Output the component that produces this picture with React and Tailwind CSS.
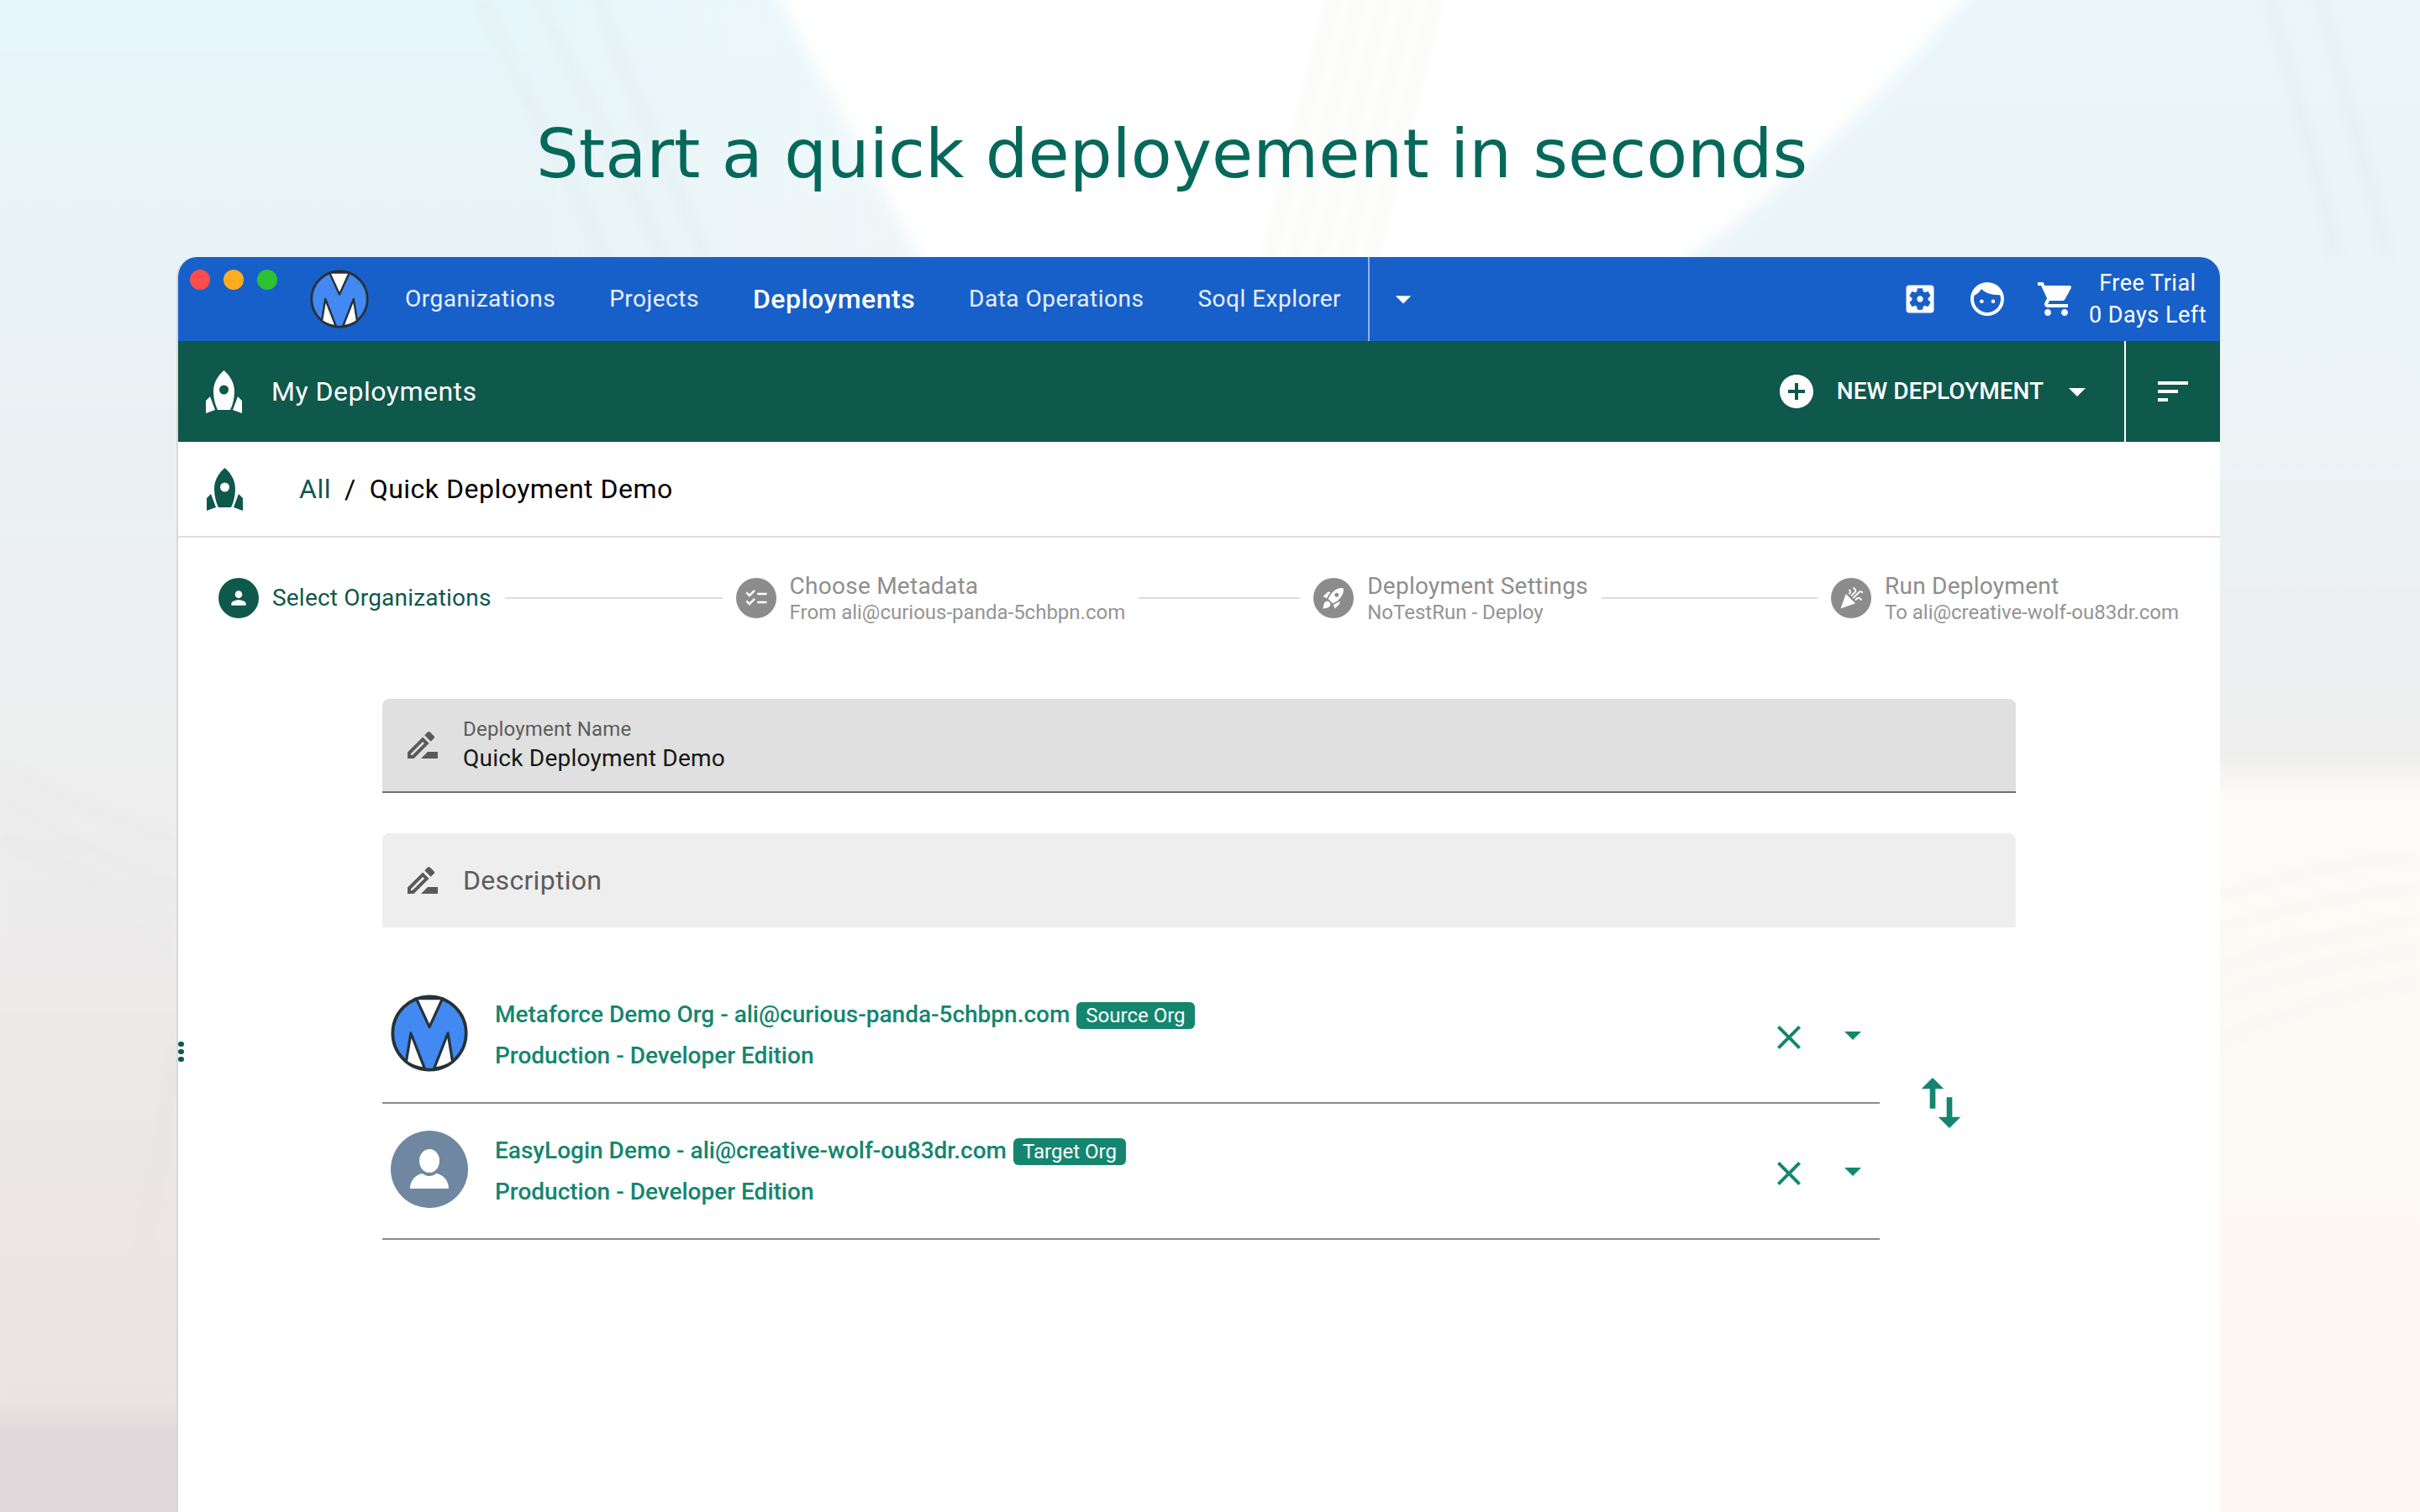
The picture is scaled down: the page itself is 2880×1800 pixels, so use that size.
import React from "react";
import {
  MdSettingsApplications, MdShoppingCart, MdAddCircle, MdSort, MdClose,
  MdArrowDropDown, MdSwapVert, MdChecklist, MdRocketLaunch, MdCelebration,
  MdOutlineDriveFileRenameOutline, MdPerson,
} from "react-icons/md";

function Rocket({ className }) {
  return (
    <svg viewBox="0 0 43 51" className={className} fill="currentColor">
      <path fillRule="evenodd" d="M21.5 0C26 4 34 12 34 25C34 33 32 41 29 47H14C11 41 9 33 9 25C9 12 17 4 21.5 0ZM21.5 17.5a5.5 5.5 0 1 0 0 11a5.5 5.5 0 1 0 0-11Z" />
      <path d="M0 36L5 31L11 47L0 51ZM43 36L38 31L32 47L43 51Z" />
    </svg>
  );
}

function Logo({ className }) {
  return (
    <svg viewBox="0 0 100 100" className={className}>
      <circle cx="50" cy="50" r="47.5" fill="#4289f1" stroke="#263238" strokeWidth="4" />
      <path d="M33 5L67 5L50 42Z" fill="#fff" stroke="#263238" strokeWidth="3.5" strokeLinejoin="round" />
      <path d="M26 50L44 96Q30 94 20 87Z" fill="#fff" stroke="#263238" strokeWidth="3.5" strokeLinejoin="round" />
      <path d="M74 50L56 96Q70 94 80 87Z" fill="#fff" stroke="#263238" strokeWidth="3.5" strokeLinejoin="round" />
    </svg>
  );
}

function Face({ className }) {
  return (
    <svg viewBox="0 0 24 24" className={className} fill="currentColor">
      <path fillRule="evenodd" d="M12 2a10 10 0 1 0 0 20a10 10 0 1 0 0-20ZM12 4a8 8 0 1 1 0 16a8 8 0 1 1 0-16Z" />
      <path d="M3 10.5C5.5 9.5 7.5 8 8.5 6C11 8.5 15 10 21.5 9.5A10 10 0 0 0 3 10.5Z" />
      <circle cx="8.7" cy="13.4" r="1.15" />
      <circle cx="15.5" cy="13.4" r="1.15" />
    </svg>
  );
}

function Background() {
  return (
    <svg viewBox="0 0 2880 1800" className="absolute inset-0 w-[2880px] h-[1800px]">
      <defs>
        <linearGradient id="left" x1="0" y1="0" x2="0" y2="1">
          <stop offset="0" stopColor="#e6f6fb" />
          <stop offset="0.17" stopColor="#e8f3f6" />
          <stop offset="0.5" stopColor="#eeefef" />
          <stop offset="0.7" stopColor="#ece8e8" />
          <stop offset="0.92" stopColor="#ebe3e3" />
          <stop offset="0.935" stopColor="#e0d8da" />
          <stop offset="1" stopColor="#e0d8da" />
        </linearGradient>
        <linearGradient id="fade" x1="0" y1="0" x2="1" y2="0">
          <stop offset="0" stopColor="#ffffff" stopOpacity="0" />
          <stop offset="0.55" stopColor="#ffffff" stopOpacity="0" />
          <stop offset="1" stopColor="#ffffff" stopOpacity="0.35" />
        </linearGradient>
        <linearGradient id="right" x1="0" y1="0" x2="0" y2="1">
          <stop offset="0" stopColor="#ebf6fa" />
          <stop offset="0.3" stopColor="#ebf3f5" />
          <stop offset="0.5" stopColor="#eeeeee" />
          <stop offset="0.525" stopColor="#fdfbf8" />
          <stop offset="0.75" stopColor="#fdf9f4" />
          <stop offset="1" stopColor="#fdf6f1" />
        </linearGradient>
        <filter id="b1"><feGaussianBlur stdDeviation="9" /></filter>
        <filter id="b2"><feGaussianBlur stdDeviation="8" /></filter>
      </defs>
      <rect width="2880" height="1800" fill="#ffffff" />
      <path d="M-20 -20H915L1100 320V1820H-20Z" fill="url(#left)" filter="url(#b1)" />
      <path d="M-20 -20H915L1100 320H-20Z" fill="url(#fade)" filter="url(#b1)" />
      <path d="M2355 -20H2900V1820H1960V340Q2150 220 2355 -20Z" fill="url(#right)" filter="url(#b1)" />
      <g fill="none" stroke="#f6f6f4" strokeWidth="9" filter="url(#b2)">
        <path d="M1590 -10L1510 310" /><path d="M1620 -10L1540 310" /><path d="M1650 -10L1570 310" /><path d="M1680 -10L1600 310" /><path d="M1710 -10L1630 310" />
        <path d="M570 -10C620 120 680 200 720 310" stroke="#e4eff2" /><path d="M640 -10C690 120 750 200 790 310" stroke="#e4eff2" /><path d="M710 -10C750 120 800 200 840 310" stroke="#e4eff2" />
        <path d="M2700 -10C2730 120 2760 200 2780 310" stroke="#e4eff2" /><path d="M2760 -10C2790 120 2820 200 2840 310" stroke="#e4eff2" />
        <g stroke="#e9e9e9">
          <path d="M0 910C80 960 150 980 212 1000" /><path d="M0 950C80 1000 150 1030 212 1060" /><path d="M0 985C80 1030 150 1060 212 1110" /><path d="M0 1005C80 1040 150 1080 212 1150" />
          <path d="M212 1240C190 1400 170 1500 150 1560" stroke="#e8e4e4" />
        </g>
        <g stroke="#f7f6f3">
          <path d="M2642 1065C2700 1050 2780 1025 2880 1020" /><path d="M2642 1105C2700 1090 2780 1065 2880 1058" /><path d="M2642 1155C2700 1130 2780 1110 2880 1095" /><path d="M2642 1190C2700 1165 2780 1145 2880 1130" /><path d="M2642 1240C2700 1210 2780 1185 2880 1170" />
        </g>
      </g>
    </svg>
  );
}

const navItem = "text-[28px] leading-[36px] text-white/90 tracking-[0.5px]";

function Step({ icon, title, sub, active, lineW }) {
  return (
    <>
      <div className={`w-[48px] h-[48px] rounded-full flex items-center justify-center text-white shrink-0 ${active ? "bg-[#0f584c]" : "bg-[#8c8c8c]"}`}>{icon}</div>
      {sub ? (
        <div className="ml-[16px] mt-[2px] shrink-0">
          <div className="text-[28px] leading-[32px] text-[#8e8e8e] tracking-[0.25px]">{title}</div>
          <div className="text-[24px] leading-[30px] text-[#949494]">{sub}</div>
        </div>
      ) : (
        <div className="ml-[16px] shrink-0 text-[28px] leading-[34px] text-[#0f584c] tracking-[0.2px]">{title}</div>
      )}
      {lineW ? <div className="h-[2px] bg-[#dcdcdc] ml-[16px] mr-[16px] shrink-0" style={{ width: lineW }} /> : null}
    </>
  );
}

function Org({ avatar, name, badge }) {
  return (
    <div className="flex items-center h-[162px] border-b-2 border-[#8a8a8a] w-[1782px] pl-[10px] shrink-0">
      <div className="-mt-[4px] shrink-0">{avatar}</div>
      <div className="ml-[32px] flex-1 text-[#14866f] font-medium text-[28px]">
        <div className="flex items-center h-[36px]">
          <span>{name}</span>
          <span className="ml-[8px] mt-[2px] h-[32px] px-[11px] rounded-[6px] bg-[#14866f] text-white text-[24px] font-normal leading-[32px]">{badge}</span>
        </div>
        <div className="mt-[13px] leading-[36px]">Production - Developer Edition</div>
      </div>
      <MdClose className="text-[#14866f] w-[48px] h-[48px] mr-[28px] mt-[6px]" />
      <MdArrowDropDown className="text-[#14866f] w-[48px] h-[48px] mr-[8px]" />
    </div>
  );
}

export default function App() {
  return (
    <div className="relative w-[2880px] h-[1800px] overflow-hidden font-['Roboto',sans-serif]">
      <Background />
      <div className="relative flex flex-col h-full">
        <h1 className="h-[306px] pt-[132px] pl-[638px] shrink-0 font-['DejaVu_Sans',sans-serif] font-normal text-[80px] leading-[104px] text-[#04695a]">
          Start a quick deployement in seconds
        </h1>
        <div className="ml-[210px] w-[2432px] flex-1 flex flex-col bg-white rounded-t-[24px] overflow-hidden border-l-2 border-[#d8d8d8]">
          <div className="-ml-[2px] h-[100px] bg-[#1860c9] shrink-0 flex items-center relative">
            <div className="absolute left-[16px] top-[15px] flex gap-[16px]">
              <span className="w-[24px] h-[24px] rounded-full bg-[#ff4d4d]" />
              <span className="w-[24px] h-[24px] rounded-full bg-[#ffae21]" />
              <span className="w-[24px] h-[24px] rounded-full bg-[#2dc22f]" />
            </div>
            <Logo className="w-[70px] h-[70px] ml-[159px] shrink-0" />
            <nav className="ml-[43px] flex items-center gap-[64px]">
              <span className={navItem}>Organizations</span>
              <span className={navItem}>Projects</span>
              <span className="text-[32px] leading-[36px] text-white font-medium tracking-[0.5px]">Deployments</span>
              <span className={navItem}>Data Operations</span>
              <span className={navItem}>Soql Explorer</span>
            </nav>
            <div className="ml-[32px] w-[2px] h-[100px] bg-[#8fb3e6]" />
            <MdArrowDropDown className="ml-[18px] w-[44px] h-[44px] text-white" />
            <div className="ml-auto flex items-center text-white">
              <MdSettingsApplications className="w-[44px] h-[44px]" />
              <Face className="w-[48px] h-[48px] ml-[34px]" />
              <MdShoppingCart className="w-[48px] h-[48px] ml-[34px]" />
              <div className="ml-[15px] mr-[16px] text-center text-[27px] leading-[38px] tracking-[0.5px]">
                <div>Free Trial</div>
                <div>0 Days Left</div>
              </div>
            </div>
          </div>
          <div className="-ml-[2px] h-[120px] bg-[#0f584c] shrink-0 flex items-center text-white">
            <Rocket className="w-[43px] h-[51px] ml-[35px] shrink-0" />
            <span className="ml-[35px] text-[32px] tracking-[0.5px]">My Deployments</span>
            <div className="ml-auto flex items-center h-full">
              <MdAddCircle className="w-[48px] h-[48px]" />
              <span className="ml-[24px] text-[28px] font-medium">NEW DEPLOYMENT</span>
              <MdArrowDropDown className="ml-[16px] w-[48px] h-[48px]" />
              <div className="ml-[32px] w-[2px] h-full bg-white" />
              <MdSort className="w-[48px] h-[48px] ml-[32px] mr-[32px]" />
            </div>
          </div>
          <div className="h-[114px] border-b-2 border-[#dcdcdc] shrink-0 flex items-center">
            <Rocket className="w-[43px] h-[51px] ml-[34px] text-[#0f584c] shrink-0" />
            <div className="ml-[67px] text-[32px] flex items-center tracking-[0.5px]">
              <span className="text-[#0f584c]">All</span>
              <span className="mx-[16px] text-black">/</span>
              <span className="text-black">Quick Deployment Demo</span>
            </div>
          </div>
          <div className="h-[144px] shrink-0 flex items-center pl-[48px]">
            <Step active title="Select Organizations" lineW={259} icon={<MdPerson className="w-[26px] h-[26px]" />} />
            <Step title="Choose Metadata" sub="From ali@curious-panda-5chbpn.com" lineW={192} icon={<MdChecklist className="w-[30px] h-[30px]" />} />
            <Step title="Deployment Settings" sub="NoTestRun - Deploy" lineW={257} icon={<MdRocketLaunch className="w-[30px] h-[30px]" />} />
            <Step title="Run Deployment" sub="To ali@creative-wolf-ou83dr.com" icon={<MdCelebration className="w-[30px] h-[30px]" />} />
          </div>
          <div className="relative flex-1 pl-[243px]">
            <span className="absolute left-[0px] top-[456px] flex flex-col gap-[3px]">
              <span className="w-[7px] h-[6px] rounded-full bg-[#0f584c]" />
              <span className="w-[7px] h-[6px] rounded-full bg-[#0f584c]" />
              <span className="w-[7px] h-[6px] rounded-full bg-[#0f584c]" />
            </span>
            <div className="mt-[48px] w-[1944px] h-[112px] bg-[#e0e0e0] rounded-t-[8px] border-b-2 border-[#6f6f6f] flex items-center">
              <MdOutlineDriveFileRenameOutline className="ml-[24px] w-[48px] h-[48px] text-[#5a5a5a] shrink-0" />
              <div className="ml-[24px]">
                <div className="text-[24px] leading-[30px] text-[#5c5c5c] tracking-[0.2px]">Deployment Name</div>
                <div className="mt-[1px] text-[28px] leading-[38px] text-[#161616] tracking-[0.25px]">Quick Deployment Demo</div>
              </div>
            </div>
            <div className="mt-[48px] w-[1944px] h-[112px] bg-[#eeeeee] rounded-t-[8px] flex items-center">
              <MdOutlineDriveFileRenameOutline className="ml-[24px] w-[48px] h-[48px] text-[#5a5a5a] shrink-0" />
              <span className="ml-[24px] text-[32px] tracking-[0.3px] text-[#5c5c5c]">Description</span>
            </div>
            <div className="relative mt-[48px]">
              <Org
                name="Metaforce Demo Org - ali@curious-panda-5chbpn.com"
                badge="Source Org"
                avatar={<Logo className="w-[92px] h-[92px]" />}
              />
              <Org
                name="EasyLogin Demo - ali@creative-wolf-ou83dr.com"
                badge="Target Org"
                avatar={
                  <svg viewBox="0 0 92 92" className="w-[92px] h-[92px]">
                    <circle cx="46" cy="46" r="46" fill="#6f87a1" />
                    <ellipse cx="46" cy="36" rx="12" ry="14" fill="#fff" />
                    <path d="M23 69C23 58 31 52 38 51C42 55 50 55 54 51C61 52 69 58 69 69Z" fill="#fff" />
                  </svg>
                }
              />
              <MdSwapVert className="absolute left-[1815px] top-[121px] w-[80px] h-[80px] text-[#14866f]" />
            </div>
          </div>
        </div>
      </div>
    </div>
  );
}
